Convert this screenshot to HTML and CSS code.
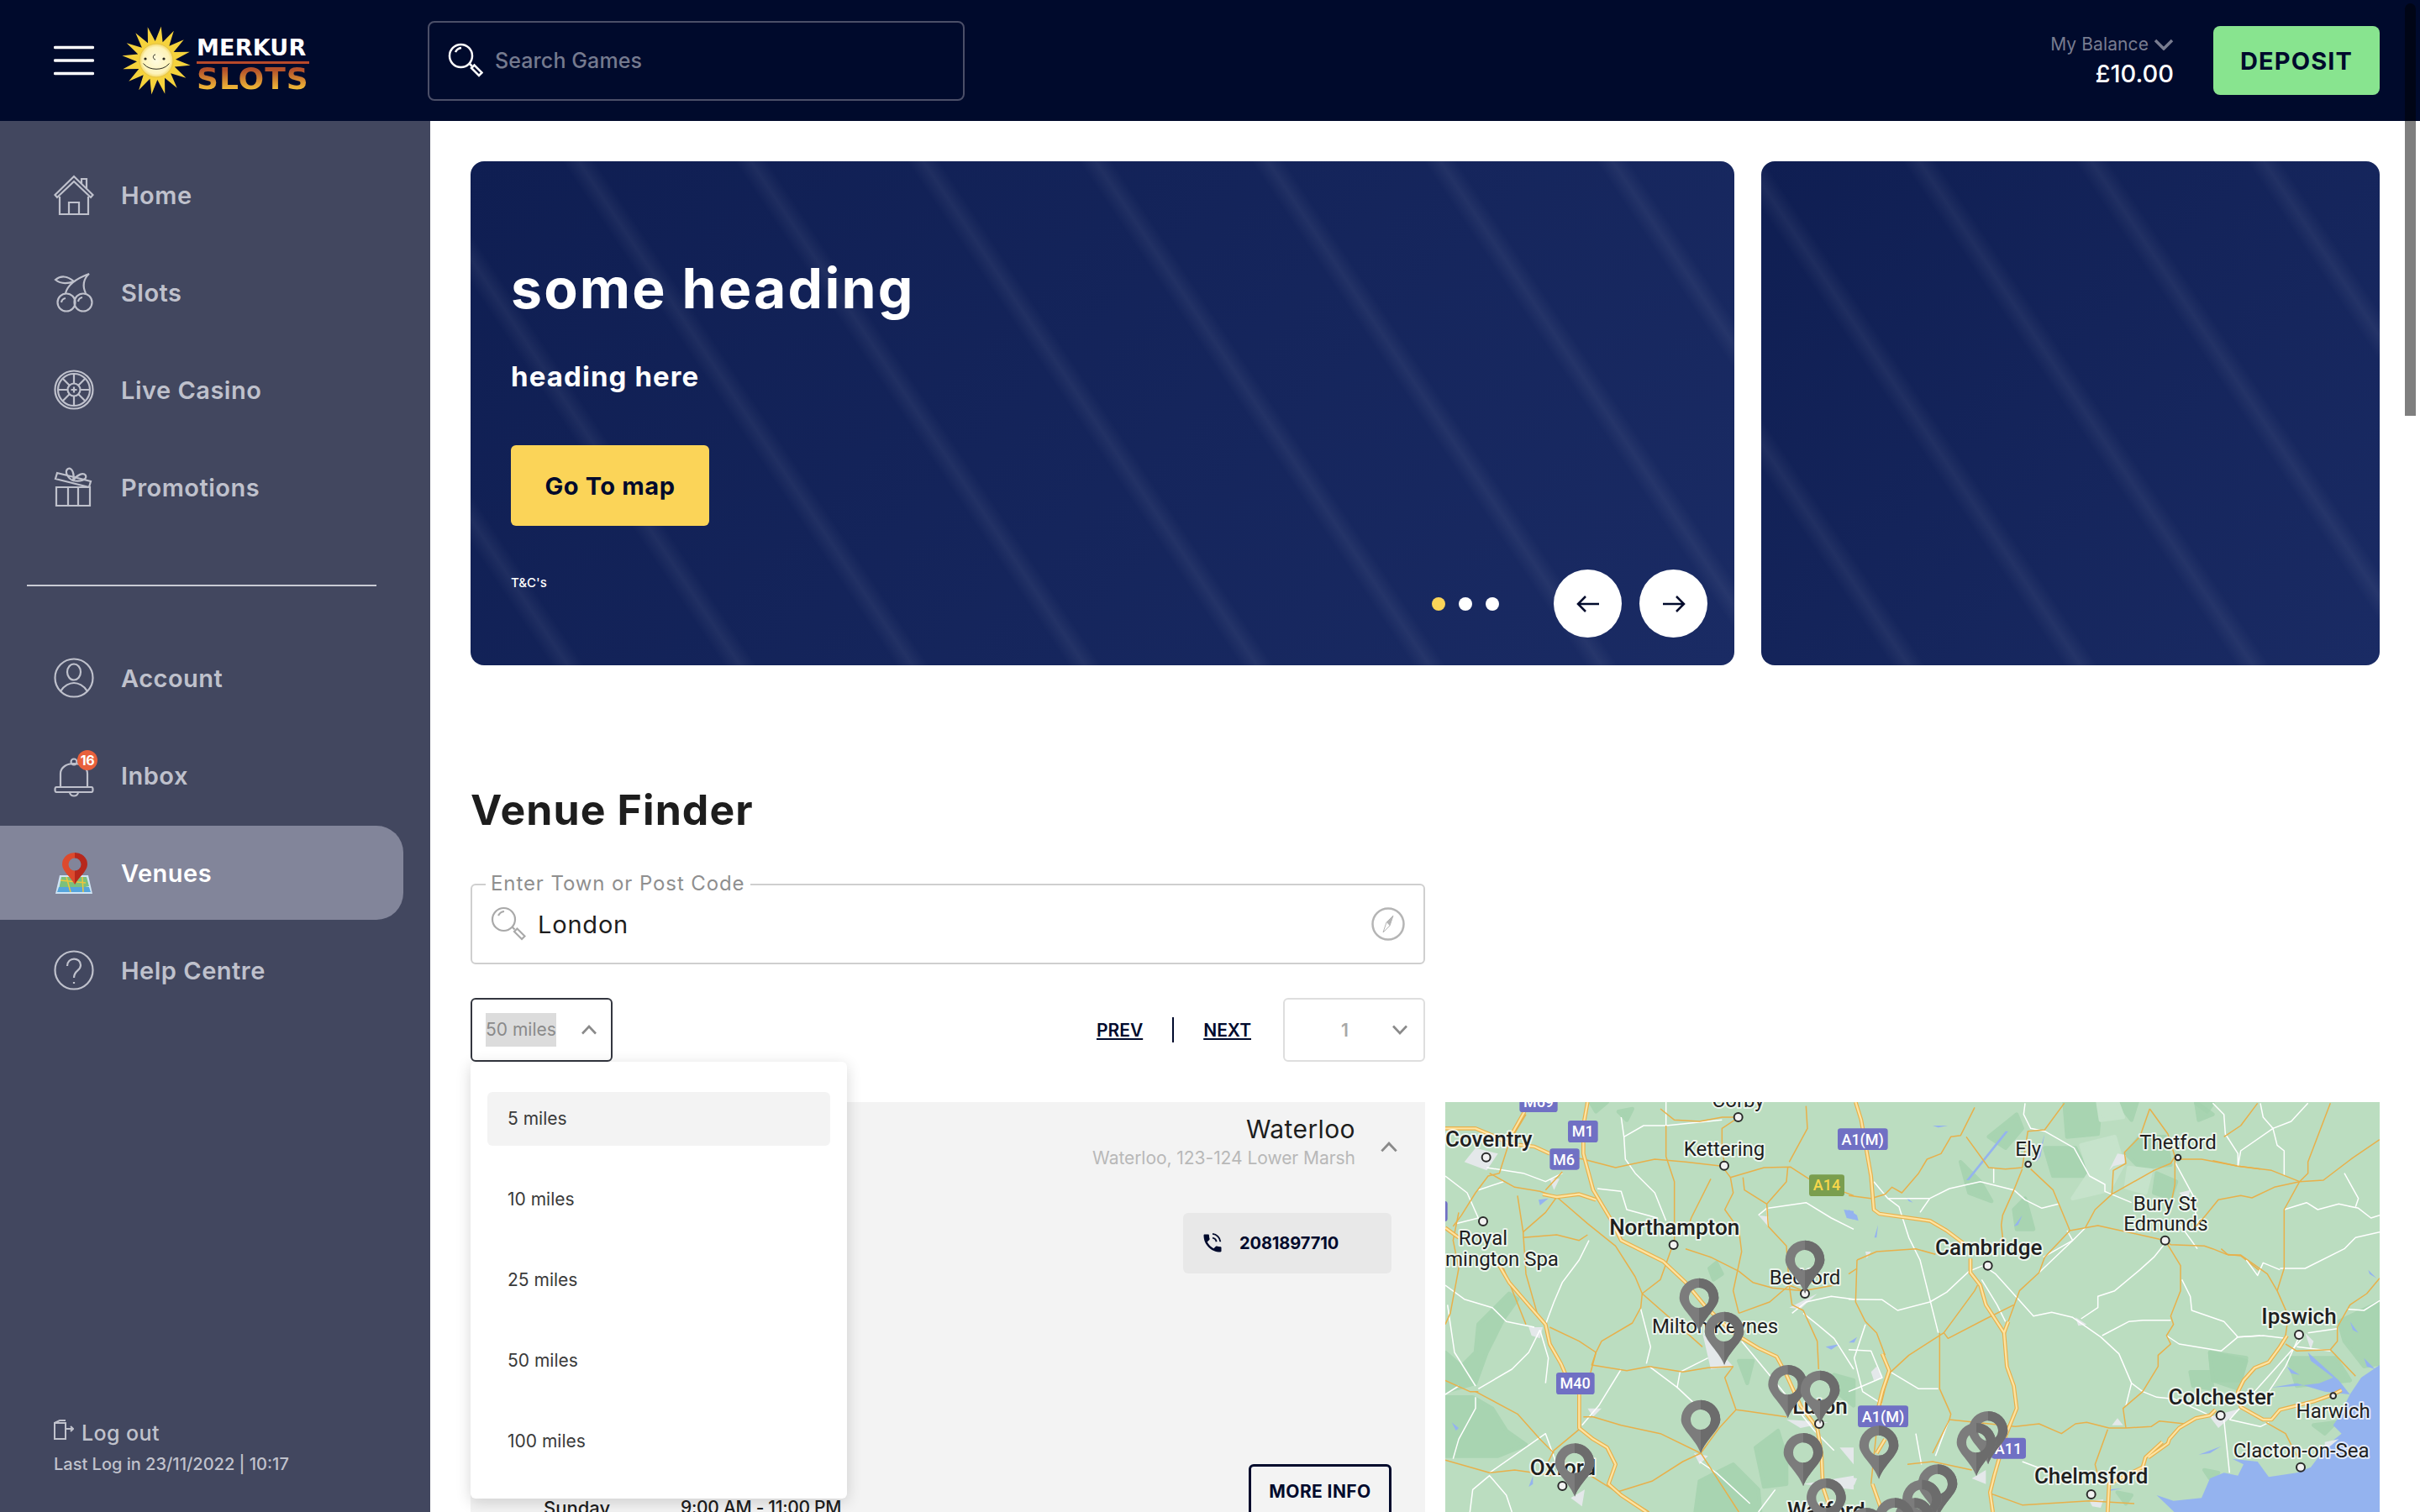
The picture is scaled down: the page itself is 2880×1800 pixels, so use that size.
FILE: index.html
```html
<!DOCTYPE html>
<html lang="en">
<head>
    <meta charset="UTF-8">
    <meta name="viewport" content="width=device-width, initial-scale=1.0">
    <title>Venue Finder</title>
    <link rel="stylesheet" href="styles.css">
</head>
<body>
    <header class="topbar">
        <div class="brand">
            <svg class="burger" viewBox="0 0 48 36"><path d="M1.5 2.5H46.5M1.5 18H46.5M1.5 33.5H46.5"/></svg>
            <svg class="sun" viewBox="-42 -42 84 84">
                <defs>
                    <radialGradient id="faceFill"><stop offset="0" stop-color="#fffbe0"/><stop offset=".8" stop-color="#fdf3b8"/><stop offset="1" stop-color="#f3d765"/></radialGradient>
                </defs>
                <polygon transform="rotate(8)" fill="#f5d23c" points="0,-41 4.5,-22.6 15.7,-37.9 12.8,-19.1 29,-29 19.1,-12.8 37.9,-15.7 22.6,-4.5 41,0 22.6,4.5 37.9,15.7 19.1,12.8 29,29 12.8,19.1 15.7,37.9 4.5,22.6 0,41 -4.5,22.6 -15.7,37.9 -12.8,19.1 -29,29 -19.1,12.8 -37.9,15.7 -22.6,4.5 -41,0 -22.6,-4.5 -37.9,-15.7 -19.1,-12.8 -29,-29 -12.8,-19.1 -15.7,-37.9 -4.5,-22.6"/>
                <circle r="20" fill="url(#faceFill)" stroke="#e6c544" stroke-width="1"/>
                <path d="M-14 5C-8 12 8 12 14 5M-14 5l-1.5-1.5M14 5l1.5-1.5M-1 -7C-4 -7 -5 -2 -1 -1" fill="none" stroke="#2b2a20" stroke-width="1"/>
                <circle cx="-13" cy="-2" r="1.6" fill="#2b2a20"/>
                <circle cx="9" cy="-2" r="1.6" fill="#2b2a20"/>
            </svg>
            <div class="wordmark">
                <span class="wordmark-top">MERKUR</span>
                <span class="wordmark-bottom">SLOTS</span>
            </div>
        </div>
        <div class="game-search">
            <svg class="game-search-icon" viewBox="0 0 42 42"><circle cx="15.5" cy="15.5" r="13.5"/><path d="M9 12a9 9 0 0 1 7-5M25.5 25.5l3 3M28 31l3.5-3.5 9 9-3.5 3.5z" transform="translate(0 -1)"/></svg>
            <span>Search Games</span>
        </div>
        <div class="balance">
            <div class="balance-label">My Balance <svg viewBox="0 0 24 14"><path d="M2 2L12 12 22 2"/></svg></div>
            <div class="balance-value">£10.00</div>
        </div>
        <a class="deposit" href="#">DEPOSIT</a>
    </header>

    <div class="layout">
        <aside class="sidebar">
            <nav class="nav-group">
                <a class="nav-item" href="#">
                    <svg class="nav-icon" viewBox="0 0 48 48"><path d="M1.5 24L24 2 46.5 24 44 27 24 8 4 27zM7 26V47H41V26M18 47V33H30V47M33 11V5H39V17"/></svg>
                    Home
                </a>
                <a class="nav-item" href="#">
                    <svg class="nav-icon" viewBox="0 0 48 48"><circle cx="15" cy="36" r="10.5"/><circle cx="35" cy="36" r="10.5"/><path d="M14 25C16 17 23 9 42 2 35 8 34 17 38 25M2 9C8 4 16 4 24 11 16 14 8 14 2 9zM9 36a6 6 0 0 1 5-5M29 35a6 6 0 0 1 5-5"/></svg>
                    Slots
                </a>
                <a class="nav-item" href="#">
                    <svg class="nav-icon" viewBox="0 0 48 48"><circle cx="24" cy="24" r="22.5"/><circle cx="24" cy="24" r="19"/><circle cx="24" cy="24" r="7.5"/><path d="M24 5V16.5M24 31.5V43M5 24H16.5M31.5 24H43M10.5 10.5L18.7 18.7M29.3 29.3L37.5 37.5M37.5 10.5L29.3 18.7M18.7 29.3L10.5 37.5M24 20.5V27.5M20.5 24H27.5"/></svg>
                    Live Casino
                </a>
                <a class="nav-item" href="#">
                    <svg class="nav-icon" viewBox="0 0 48 48"><path d="M3 24H43V46H3zM17 24V46M29 24V46M2 14L42 24 44 17 4 7zM23 16C17 14 12 5 17 2 22 0 25 9 23 16zM23 16C28 9 35 6 38 10 40 15 31 18 23 16z"/></svg>
                    Promotions
                </a>
            </nav>
            <hr class="nav-rule">
            <nav class="nav-group">
                <a class="nav-item" href="#">
                    <svg class="nav-icon" viewBox="0 0 48 48"><circle cx="24" cy="24" r="22.5"/><ellipse cx="24" cy="17" rx="8" ry="9.5"/><path d="M8 40C12 33 19 30 24 30S36 33 40 40"/></svg>
                    Account
                </a>
                <a class="nav-item" href="#">
                    <span class="nav-icon-wrap">
                        <svg class="nav-icon" viewBox="0 0 48 48"><path d="M8 38V22C8 6 40 6 40 22V38M3 38H45C47 38 47 44 45 44H3C1 44 1 38 3 38zM19 44C19 50 29 50 29 44"/><circle cx="24" cy="8" r="3.5"/></svg>
                        <span class="badge">16</span>
                    </span>
                    Inbox
                </a>
                <a class="nav-item nav-item-active" href="#">
                    <svg class="nav-icon nav-icon-color" viewBox="0 0 48 48">
                        <path d="M7 27H41L46 49H2z" fill="#cfe4f5"/>
                        <path d="M9 29H39L42 40 24 44H6z" fill="#7cc07c"/>
                        <path d="M6 41H42L44 47H4z" fill="#55a5dc"/>
                        <path d="M8 33L38 36M15 29L20 47M34 29L35 47" fill="none" stroke="#f0c63c" stroke-width="1.5"/>
                        <path d="M25 38C20 29 10 22 10 14A15 14 0 0 1 25 0z" fill="#dc4a2d"/>
                        <path d="M25 38C30 29 40 22 40 14A15 14 0 0 0 25 0z" fill="#b7281c"/>
                        <circle cx="25" cy="14" r="7.5" fill="#82859a"/>
                    </svg>
                    Venues
                </a>
                <a class="nav-item" href="#">
                    <svg class="nav-icon" viewBox="0 0 48 48"><circle cx="24" cy="24" r="22.5"/><path d="M16 19C16 8 32 8 32 18 32 25 24 24 24 33M24 38V40"/></svg>
                    Help Centre
                </a>
            </nav>
            <div class="sidebar-foot">
                <a class="logout" href="#">
                    <svg viewBox="0 0 24 24"><path d="M1 4H14V23H1zM1 4L7 1H14M14 11H23M20 8L23 11 20 14"/></svg>
                    Log out
                </a>
                <div class="last-login">Last Log in 23/11/2022 | 10:17</div>
            </div>
        </aside>

        <main class="content">
            <section class="hero-row">
                <div class="hero hero-main">
                    <h2 class="hero-title">some heading</h2>
                    <p class="hero-sub">heading here</p>
                    <a class="hero-btn" href="#">Go To map</a>
                    <div class="hero-foot">
                        <span class="hero-terms">T&amp;C's</span>
                        <div class="hero-controls">
                            <span class="dot dot-on"></span><span class="dot"></span><span class="dot"></span>
                            <a class="arrow arrow-first" href="#"><svg viewBox="0 0 28 24"><path d="M27 12H2M11 3L2 12 11 21"/></svg></a>
                            <a class="arrow" href="#"><svg viewBox="0 0 28 24"><path d="M1 12H26M17 3L26 12 17 21"/></svg></a>
                        </div>
                    </div>
                </div>
                <div class="hero hero-side"></div>
            </section>

            <section class="venues">
                <h1 class="venues-title">Venue Finder</h1>
                <div class="venue-search">
                    <span class="venue-search-label">Enter Town or Post Code</span>
                    <svg class="venue-search-icon" viewBox="0 0 42 42"><circle cx="15.5" cy="15.5" r="13.5"/><path d="M9 12a9 9 0 0 1 7-5M25.5 25.5l3 3M28 31l3.5-3.5 9 9-3.5 3.5z" transform="translate(0 -1)"/></svg>
                    <span class="venue-search-value">London</span>
                    <svg class="compass" viewBox="0 0 40 40"><circle cx="20" cy="20" r="18.5"/><path class="compass-needle" d="M26 10L22 22 14 30 18 18z"/><path class="compass-half" d="M26 10L22 22 18 18z"/></svg>
                </div>

                <div class="filter-row">
                    <div class="select-wrap">
                        <div class="select select-open">
                            <span class="select-picked">50 miles</span>
                            <svg class="chevron" viewBox="0 0 20 12"><path d="M2 10.5L10 2 18 10.5"/></svg>
                        </div>
                        <ul class="dropdown">
                            <li class="dropdown-on">5 miles</li>
                            <li>10 miles</li>
                            <li>25 miles</li>
                            <li>50 miles</li>
                            <li>100 miles</li>
                        </ul>
                    </div>
                    <div class="pager">
                        <a href="#">PREV</a>
                        <span class="pager-rule"></span>
                        <a href="#">NEXT</a>
                        <div class="select select-page">
                            <span>1</span>
                            <svg class="chevron" viewBox="0 0 20 12"><path d="M2 1.5L10 10 18 1.5"/></svg>
                        </div>
                    </div>
                </div>

                <div class="results">
                    <article class="venue-card">
                        <div class="venue-head">
                            <div>
                                <div class="venue-name">Waterloo</div>
                                <div class="venue-address">Waterloo, 123-124 Lower Marsh</div>
                            </div>
                            <svg class="chevron venue-chevron" viewBox="0 0 20 12"><path d="M2 10.5L10 2 18 10.5"/></svg>
                        </div>
                        <div class="venue-phone-row">
                            <a class="venue-phone" href="#">
                                <svg viewBox="0 0 24 24"><path d="M6.6 10.8c1.4 2.8 3.8 5.1 6.6 6.6l2.2-2.2c.3-.3.7-.4 1-.2 1.1.4 2.3.6 3.6.6.6 0 1 .4 1 1V20c0 .6-.4 1-1 1C10.6 21 3 13.4 3 4c0-.6.4-1 1-1h3.5c.6 0 1 .4 1 1 0 1.3.2 2.5.6 3.6.1.3 0 .7-.3 1z"/><path class="phone-arc" d="M12 2.5a9 9 0 0 1 8 8M12 6.5a5 5 0 0 1 4 4"/></svg>
                                2081897710
                            </a>
                        </div>
                        <div class="venue-foot">
                            <div class="venue-hours"><span>Sunday</span><span class="venue-time">9:00 AM - 11:00 PM</span></div>
                            <a class="more-info" href="#">MORE INFO</a>
                        </div>
                    </article>

                    <div class="map">
                        <svg class="map-svg" viewBox="12 6 3336 1500">
                            <defs>
                                <g id="pin">
                                    <path fill="#7c7c7c" fill-rule="evenodd" d="M0 0C-18-50-70-85-70-120A70 70 0 0 1 70-120C70-85 18-50 0 0ZM36-120A36 36 0 1 0-36-120 36 36 0 1 0 36-120Z"/>
                                    <path fill="#6c6c6c" d="M0 0C18-50 70-85 70-120A70 70 0 0 0 0-190V-156A36 36 0 0 1 0-84Z"/>
                                </g>
                            </defs>

                            <!-- left part -->
                            <g>
                                <g class="map-wood">
                                    <path d="M12 900L70 950 120 900 130 800 190 740 240 690 270 710 220 780 160 900 120 1010 12 1040Z"/>
                                    <path d="M12 1060L110 1060 180 1100 230 1180 300 1230 200 1270 90 1270 12 1270Z"/>
                                    <path d="M900 1506L920 1360 1040 1300 1130 1390 1140 1506Z"/>
                                    <path d="M1120 1240L1200 1180 1230 1280 1230 1370 1150 1380Z"/>
                                    <path d="M1060 930L1110 930 1090 1010Z"/>
                                    <path d="M955 600L980 580 1000 620 970 640Z"/>
                                    <path d="M1400 980L1470 1000 1470 1090 1420 1050Z"/>
                                    <path d="M530 6L590 6 550 40Z"/>
                                    <path d="M630 40L680 30 660 70Z"/>
                                </g>
                                <g class="map-water">
                                    <path d="M345 355L380 350 350 375Z"/>
                                    <path d="M1435 390L1470 395 1470 425 1445 420Z"/>
                                    <path d="M35 1150L60 1170 50 1180Z"/>
                                    <path d="M1370 880L1420 870 1390 890Z"/>
                                    <path d="M310 1380L325 1340 325 1370Z"/>
                                </g>
                                <g class="map-town">
                                    <path d="M120 170L200 190 160 250 80 220Z"/>
                                    <path d="M385 280L420 280 400 320Z"/>
                                    <path d="M1130 410L1165 415 1165 450Z"/>
                                    <path d="M310 810L360 810 350 850 320 840Z"/>
                                    <path d="M930 830L1040 950 960 960Z"/>
                                    <path d="M1240 740L1340 690 1280 745Z"/>
                                    <path d="M520 1100L570 1100 540 1130Z"/>
                                    <path d="M460 1420L510 1390 500 1450Z"/>
                                    <path d="M1230 1140L1380 1150 1280 1170Z"/>
                                    <path d="M1420 1240L1470 1240 1470 1300Z"/>
                                    <path d="M1290 1370L1470 1340 1470 1390Z"/>
                                    <path d="M900 1260L950 1270 920 1300Z"/>
                                </g>
                                <g class="map-white">
                                    <path d="M650 130L720 90 800 90 1000 70"/>
                                    <path d="M640 60L650 130 655 210 690 260 760 330 800 430"/>
                                    <path d="M555 315L640 325 660 390 770 420"/>
                                    <path d="M1165 385L1300 365 1390 420 1470 460"/>
                                    <path d="M1165 450L1160 385 1130 410"/>
                                    <path d="M525 500L490 570 430 650 400 720 370 800"/>
                                    <path d="M12 660L80 710 180 740 230 790 330 810"/>
                                    <path d="M20 730L45 900 120 1020"/>
                                    <path d="M12 1050L60 1020M130 1030L250 960 310 900 350 820"/>
                                    <path d="M350 820L380 920 370 1010"/>
                                    <path d="M710 745L745 880 730 940"/>
                                    <path d="M740 950L840 1025 850 970 950 920"/>
                                    <path d="M840 1025L920 1100"/>
                                    <path d="M640 960L560 1090 500 1160"/>
                                    <path d="M120 1060L120 1100 60 1210 40 1280"/>
                                    <path d="M170 1330L370 1190 410 1300"/>
                                    <path d="M1070 860L1210 1030 1330 1180 1400 1250"/>
                                    <path d="M1250 760L1300 720 1390 700 1470 710"/>
                                    <path d="M1290 760L1340 800 1400 850 1470 960"/>
                                    <path d="M12 270L90 330 130 420 50 440"/>
                                    <path d="M160 240L290 260 370 290 430 260"/>
                                    <path d="M130 320L220 290"/>
                                    <path d="M100 1470L110 1390 170 1340 230 1410 250 1470"/>
                                    <path d="M920 1290L980 1330 1100 1440"/>
                                    <path d="M1190 1390L1130 1470"/>
                                    <path d="M800 0L800 90"/>
                                </g>
                                <g class="map-road">
                                    <path d="M300 50L240 150 205 260 165 270 120 330 70 410 40 450"/>
                                    <path d="M170 260L260 310 350 325 410 345 520 440 620 520 690 630 715 690 840 800 930 880"/>
                                    <path d="M370 320L430 255"/>
                                    <path d="M270 340L290 470 300 620 340 760"/>
                                    <path d="M290 490L410 480 490 500 520 480"/>
                                    <path d="M290 470L370 400 410 345"/>
                                    <path d="M715 690L710 740 680 795 570 860 550 900 535 945 660 965 740 950 860 970 950 955 1040 950"/>
                                    <path d="M385 810L490 860 550 900"/>
                                    <path d="M715 690L780 640 830 500"/>
                                    <path d="M830 500L830 290 800 200 800 90"/>
                                    <path d="M780 30L830 70 920 75 1000 60 1060 60"/>
                                    <path d="M1060 60L1000 100 1000 170 1010 235"/>
                                    <path d="M960 280L890 420 870 480"/>
                                    <path d="M1030 275L1040 330 1010 390 1060 460 1070 540 1040 680 1060 760"/>
                                    <path d="M1075 275L1080 320 1160 370 1230 290 1235 238"/>
                                    <path d="M1160 370L1165 450 1230 520 1240 660 1290 680"/>
                                    <path d="M870 530L960 560 1060 610 1110 650 1180 670 1290 680 1400 660"/>
                                    <path d="M1060 760L1170 720 1240 660 1250 730 1290 750 1340 860 1345 960"/>
                                    <path d="M1300 20L1305 100 1240 220"/>
                                    <path d="M1040 950L1010 990 1050 1105 1090 1110 1230 1130"/>
                                    <path d="M1050 1105L990 1170 924 1260 860 1290 750 1360 620 1400"/>
                                    <path d="M12 1285L170 1330 260 1320 400 1340"/>
                                    <path d="M505 1130L540 1130 640 1160 780 1190 924 1260"/>
                                    <path d="M490 1175L400 1250 380 1290"/>
                                    <path d="M130 1040L100 1040 12 1000"/>
                                    <path d="M120 1040L270 1120 350 1210 400 1260"/>
                                    <path d="M925 1260L970 1330 1060 1470"/>
                                    <path d="M530 1340L740 1470"/>
                                    <path d="M550 900L530 975"/>
                                    <path d="M60 400L40 500 60 600 30 760 12 800"/>
                                    <path d="M220 600L300 800"/>
                                    <path d="M385 190L505 210 620 240 760 210 870 220 1000 235 1030 275 1150 240 1245 238 1310 280 1470 340"/>
                                </g>
                                <g class="map-motorway">
                                    <g id="motorwaysLeft">
                                        <path d="M520 6L505 90 505 190 540 320 600 420 640 500 700 530 790 575 870 650 940 735 1040 830 1130 885 1195 915 1230 980 1280 1090 1340 1170 1355 1260 1360 1380 1390 1470"/>
                                        <path d="M12 100L120 100 180 125 240 155 330 165 385 190"/>
                                        <path d="M360 335L410 345 490 335 550 355"/>
                                        <path d="M205 590L240 650 300 720 370 800 385 870 425 940 440 975"/>
                                        <path d="M12 455L60 490"/>
                                        <path d="M490 1040L490 1170 540 1210 590 1240 620 1300 595 1370 640 1410 730 1470"/>
                                        <path d="M295 40L250 120"/>
                                    </g>
                                </g>
                                <use class="map-motorway-inner" href="#motorwaysLeft"/>
                                <rect class="shield" x="277" y="-40" width="136" height="82" rx="10"/>
                                <text class="shield-text" x="345" y="24">M69</text>
                                <rect class="shield" x="450" y="72" width="107" height="78" rx="10"/>
                                <text class="shield-text" x="503" y="130">M1</text>
                                <rect class="shield" x="385" y="172" width="106" height="76" rx="10"/>
                                <text class="shield-text" x="435" y="230">M6</text>
                                <rect class="shield" x="408" y="972" width="137" height="78" rx="10"/>
                                <text class="shield-text" x="476" y="1030">M40</text>
                                <rect class="shield" x="-40" y="360" width="60" height="72" rx="10"/>
                                <rect class="shield shield-green" x="1311" y="265" width="126" height="77" rx="10"/>
                                <text class="shield-text shield-text-green" x="1374" y="322">A14</text>
                                <g class="map-dots">
                                    <circle cx="1058" cy="60" r="15"/><circle cx="158" cy="203" r="15"/><circle cx="1008" cy="233" r="15"/><circle cx="147" cy="432" r="15"/><circle cx="827" cy="516" r="15"/><circle cx="1296" cy="690" r="15"/><circle cx="1347" cy="1155" r="15"/><circle cx="430" cy="1377" r="15"/>
                                </g>
                                <text class="map-label" x="1058" y="25">Corby</text>
                                <text class="map-label map-label-big map-label-start" x="12" y="165">Coventry</text>
                                <text class="map-label" x="1008" y="198">Kettering</text>
                                <text class="map-label" x="147" y="517">Royal</text>
                                <text class="map-label map-label-start" x="12" y="590">mington Spa</text>
                                <text class="map-label map-label-big" x="830" y="480">Northampton</text>
                                <text class="map-label" x="1296" y="657">Bedford</text>
                                <text class="map-label" x="975" y="832">Milton Keynes</text>
                                <text class="map-label map-label-big" x="1350" y="1118">Luton</text>
                                <text class="map-label map-label-big" x="432" y="1338">Oxford</text>
                                <text class="map-label map-label-big" x="1372" y="1490">Watford</text>
                            </g>

                            <!-- middle part -->
                            <g transform="translate(1452 0)">
                                <g class="map-wood">
                                    <path d="M500 130L600 50 620 100 560 170Z"/>
                                    <path d="M400 220L470 290 510 360 430 330Z"/>
                                    <path d="M590 390L630 350 660 460 600 460Z"/>
                                    <path d="M700 170L810 170 860 270 730 270Z"/>
                                    <path d="M770 6L900 6 890 120 780 130Z"/>
                                    <path d="M990 190L1040 130 1130 130 1150 230 1040 240Z"/>
                                    <path d="M960 6L1030 6 1010 70Z"/>
                                    <path d="M1290 900L1420 920 1400 1000 1300 1000Z"/>
                                    <path d="M1220 970L1290 970 1300 1030 1230 1020Z"/>
                                    <path d="M1240 6L1300 50 1250 70Z"/>
                                    <path d="M1100 260L1170 290 1150 350 1090 330Z"/>
                                    <path d="M960 1400L1010 1410 990 1440Z"/>
                                </g>
                                <g class="map-light">
                                    <path d="M830 160L950 130 980 230 930 320 800 350 860 260Z"/>
                                    <path d="M1000 240L1080 250 1060 330 990 310Z"/>
                                    <path d="M890 6L960 6 980 60 900 70Z"/>
                                </g>
                                <g class="map-water">
                                    <path d="M0 390L30 410 35 430 0 420Z"/>
                                    <path d="M205 345L230 365 215 360Z"/>
                                    <path d="M590 450L620 410 605 445Z"/>
                                    <path d="M300 90L355 90 320 97Z"/>
                                    <path d="M92 490L105 445 100 490Z"/>
                                    <path d="M0 865L30 845 20 865Z"/>
                                    <path d="M420 285L430 285 570 110 560 110Z"/>
                                    <path d="M670 220L700 120 685 200Z"/>
                                    <path d="M930 1390L980 1385 930 1395Z"/>
                                </g>
                                <g class="map-town">
                                    <path d="M930 250L960 190 990 195 985 225 945 235Z"/>
                                    <path d="M80 970L100 950 120 990 90 1000Z"/>
                                    <path d="M1180 330L1220 320 1210 360Z"/>
                                    <path d="M940 1160L980 1160 960 1135Z"/>
                                    <path d="M1290 1130L1400 1100 1320 1170Z"/>
                                    <path d="M860 1430L910 1425 900 1455 870 1450Z"/>
                                    <path d="M440 1350L490 1320 490 1370Z"/>
                                    <path d="M60 540L80 540 65 565Z"/>
                                    <path d="M0 1345L30 1350 20 1375Z"/>
                                    <path d="M810 775L850 800 820 805Z"/>
                                </g>
                                <g class="map-white">
                                    <path d="M630 10L625 50 650 100 700 110 805 170 860 270 915 300 915 325 1010 365"/>
                                    <path d="M90 290L140 350 180 380 215 490 255 570 320 830"/>
                                    <path d="M140 350L290 350 360 315 470 290 590 320 630 355 690 385 750 370"/>
                                    <path d="M255 400L290 350"/>
                                    <path d="M518 240V295"/>
                                    <path d="M0 710L120 712 175 750 290 720 350 685 430 610 480 590 525 620 660 770 725 757 800 775 900 845 965 905 1010 1010 1050 1040 1100 1060 1150 1065"/>
                                    <path d="M475 640L530 730 560 790"/>
                                    <path d="M680 615L800 500 845 455"/>
                                    <path d="M695 560L800 500 780 465"/>
                                    <path d="M830 780L890 740 890 700 950 680 1040 605 1090 560 1130 510"/>
                                    <path d="M905 840L1000 790 1050 785 1150 785"/>
                                    <path d="M1135 840L1180 870 1330 895 1390 845 1470 840"/>
                                    <path d="M1190 640L1220 700 1225 750 1340 790 1390 845"/>
                                    <path d="M1010 1010L990 1090"/>
                                    <path d="M150 970L250 1030 320 1030"/>
                                    <path d="M60 800L20 920 50 1040 120 1085"/>
                                    <path d="M0 890L80 895 120 990 50 1020 0 1040"/>
                                    <path d="M1180 440L1245 530"/>
                                    <path d="M620 1290L700 1320"/>
                                    <path d="M240 1190L260 1300M355 1150L310 1270"/>
                                    <path d="M1150 1060L1300 1130"/>
                                    <path d="M1165 220L1230 340 1240 410"/>
                                </g>
                                <g class="map-road">
                                    <path d="M0 340L80 350 130 335 155 310 190 330 250 260 280 210 330 190 365 130 400 125 450 25"/>
                                    <path d="M420 130L500 240 560 245 620 240 640 110 700 105 770 10"/>
                                    <path d="M620 245L590 320 550 410 545 445 550 490 530 520"/>
                                    <path d="M650 245L730 320 780 440 790 465 890 447 1130 500 1150 515 1270 520 1300 530 1350 550 1400 555 1470 610"/>
                                    <path d="M1130 500L1185 590 1185 680 1150 770 1160 800 1135 840 1150 870 1105 910 1105 950 1050 1040 980 1100 990 1170"/>
                                    <path d="M790 465L700 560 680 615 610 680 570 790"/>
                                    <path d="M845 455L880 390 940 335 1090 250 1150 225 1165 200 1165 300 1155 350"/>
                                    <path d="M940 335L945 250 990 225 985 185 1040 130 1075 30"/>
                                    <path d="M1075 30L1140 120 1165 200"/>
                                    <path d="M1175 210L1260 210 1390 235 1470 245"/>
                                    <path d="M30 570L100 540 240 530 310 550"/>
                                    <path d="M0 620L30 600"/>
                                    <path d="M325 830L325 1030 365 1120 360 1140 595 1165 680 1155 760 1190 810 1155 850 1150 930 1170 990 1170 1080 1165 1110 1145 1200 1155"/>
                                    <path d="M590 730L490 780 355 850 340 830 450 680 460 660"/>
                                    <path d="M340 830L215 910 150 970 130 1030 105 1130"/>
                                    <path d="M925 1175L880 1300 890 1340"/>
                                    <path d="M510 1405L620 1445 860 1430 1020 1440"/>
                                    <path d="M360 1140L300 1260"/>
                                    <path d="M210 1300L300 1290 440 1320"/>
                                    <path d="M30 570L25 720 60 790 100 830 130 910"/>
                                    <path d="M105 1130L80 1370"/>
                                </g>
                                <g class="map-motorway">
                                    <g id="motorwaysMiddle">
                                        <path d="M25 6L45 70 80 270 90 390 110 405 290 430 350 465 410 510"/>
                                        <path d="M435 565L435 615 470 660 490 730 555 830 565 950 590 1020 600 1100 560 1200 520 1340 505 1400 515 1470"/>
                                        <path d="M555 830L570 790"/>
                                        <path d="M120 905L145 965 120 1040 100 1120"/>
                                        <path d="M100 1260L130 1210"/>
                                        <path d="M85 1370L120 1470"/>
                                        <path d="M1120 1220L1060 1275 1050 1310 930 1370 925 1470"/>
                                        <path d="M1310 1105L1290 1125 1240 1135 1180 1170 1145 1210 1140 1225 1070 1275"/>
                                    </g>
                                </g>
                                <use class="map-motorway-inner" href="#motorwaysMiddle"/>
                                <rect class="shield" x="-39" y="100" width="179" height="77" rx="10"/>
                                <text class="shield-text" x="50" y="158">A1(M)</text>
                                <rect class="shield" x="33" y="1090" width="180" height="77" rx="10"/>
                                <text class="shield-text" x="123" y="1148">A1(M)</text>
                                <rect class="shield" x="510" y="1205" width="123" height="75" rx="10"/>
                                <text class="shield-text" x="570" y="1263">A11</text>
                                <g class="map-dots">
                                    <circle cx="641" cy="228" r="10"/><circle cx="1176" cy="204" r="10"/><circle cx="1130" cy="500" r="15"/><circle cx="497" cy="590" r="15"/><circle cx="1328" cy="1125" r="15"/><circle cx="866" cy="1407" r="15"/>
                                </g>
                                <text class="map-label" x="641" y="198">Ely</text>
                                <text class="map-label" x="1176" y="175">Thetford</text>
                                <text class="map-label" x="1130" y="393">Bury St</text>
                                <text class="map-label" x="1132" y="465">Edmunds</text>
                                <text class="map-label map-label-big" x="500" y="553">Cambridge</text>
                                <text class="map-label map-label-big" x="866" y="1368">Chelmsford</text>
                            </g>

                            <!-- right part -->
                            <g transform="translate(2052 0)">
                                <g class="map-wood">
                                    <path d="M1150 790L1296 720 1296 940 1240 950 1170 860Z"/>
                                    <path d="M970 920L1140 920 1190 1000 1000 1020Z"/>
                                    <path d="M690 900L820 930 790 1030 700 1000Z"/>
                                    <path d="M640 10L700 10 680 40Z"/>
                                    <path d="M1060 1160L1140 1150 1100 1190Z"/>
                                    <path d="M670 1320L720 1330 690 1350Z"/>
                                </g>
                                <path class="map-sea" d="M1296 945L1230 990 1190 1050 1150 1130 1130 1160 1160 1190 1110 1230 1050 1310 1000 1330 900 1345 860 1290 770 1280 810 1300 790 1340 740 1330 690 1350 660 1420 560 1430 500 1410 600 1506 1296 1506Z"/>
                                <path class="map-sea" d="M910 1025L1000 1010 1100 1040 1190 1050 1150 1000 1040 900 1050 930 1130 990 1080 1010 1000 1020Z"/>
                                <g class="map-water">
                                    <path d="M650 1265L730 1235 690 1260Z"/>
                                    <path d="M965 950L1010 980 980 975Z"/>
                                    <path d="M1255 605L1285 635 1260 620Z"/>
                                    <path d="M1240 920L1280 960 1250 950Z"/>
                                    <path d="M1190 790L1220 830 1200 820Z"/>
                                </g>
                                <g class="map-town">
                                    <path d="M1030 830L1060 860 1050 890Z"/>
                                    <path d="M1100 1220L1150 1210 1100 1250Z"/>
                                </g>
                                <g class="map-white">
                                    <path d="M700 10L740 50 745 120 790 190 790 235"/>
                                    <path d="M790 235L800 180 915 100 930 160 955 180 955 270"/>
                                    <path d="M870 10L880 60 915 100 980 75 1040 10"/>
                                    <path d="M955 390L1035 365 1075 390 1150 370 1220 385 1265 420 1296 410"/>
                                    <path d="M1210 380L1220 350 1170 260"/>
                                    <path d="M940 600L1030 600 1170 530 1210 490 1296 470"/>
                                    <path d="M820 570L860 625 880 580 940 605"/>
                                    <path d="M785 845L880 840 960 850"/>
                                    <path d="M1010 840L960 950 900 1040"/>
                                    <path d="M1040 830L1145 815"/>
                                    <path d="M760 1140L1020 850"/>
                                    <path d="M740 1140L760 1330"/>
                                    <path d="M760 1140L870 1165 900 1150"/>
                                    <path d="M1296 715L1240 750 1180 745"/>
                                    <path d="M1000 880L1120 895"/>
                                </g>
                                <g class="map-road">
                                    <path d="M740 130L800 90 860 10"/>
                                    <path d="M700 215L790 235 910 250 1010 290 1095 285 1200 205 1296 140"/>
                                    <path d="M1120 10L1040 220 1040 260 1010 290 955 390 955 600 930 680 970 770 960 840"/>
                                    <path d="M1010 290L920 310 840 348 800 340 720 355 675 410 640 450"/>
                                    <path d="M730 530L755 552 800 552 895 620 930 680"/>
                                    <path d="M1296 635L1250 690 1190 730 1145 810 1145 860 1120 890 1000 895 960 870"/>
                                    <path d="M1120 890L1210 985"/>
                                    <path d="M890 1150L960 1190 1000 1270"/>
                                </g>
                                <g class="map-motorway">
                                    <g id="motorwaysRight">
                                        <path d="M965 840L940 880 900 935 850 955 810 1000 790 1040 800 1095 880 1140 910 1140 940 1105 1060 1075 1130 1050 1160 1035"/>
                                    </g>
                                </g>
                                <use class="map-motorway-inner" href="#motorwaysRight"/>
                                <g class="map-dots">
                                    <circle cx="1008" cy="837" r="15"/><circle cx="1130" cy="1055" r="10"/><circle cx="1014" cy="1310" r="15"/>
                                </g>
                                <text class="map-label map-label-big" x="1008" y="798">Ipswich</text>
                                <text class="map-label map-label-big" x="730" y="1087">Colchester</text>
                                <text class="map-label" x="1130" y="1135">Harwich</text>
                                <text class="map-label" x="1016" y="1276">Clacton-on-Sea</text>
                            </g>

                            <!-- venue pins -->
                            <use href="#pin" transform="translate(1296 690)"/>
                            <use href="#pin" transform="translate(918 825)"/>
                            <use href="#pin" transform="translate(1008 945)"/>
                            <use href="#pin" transform="translate(1235 1135)"/>
                            <use href="#pin" transform="translate(1350 1155)"/>
                            <use href="#pin" transform="translate(924 1260)"/>
                            <use href="#pin" transform="translate(474 1415)"/>
                            <use href="#pin" transform="translate(1290 1378)"/>
                            <use href="#pin" transform="translate(1372 1540)"/>
                            <use href="#pin" transform="translate(1560 1352)"/>
                            <use href="#pin" transform="translate(1950 1300)"/>
                            <use href="#pin" transform="translate(1908 1342)"/>
                            <use href="#pin" transform="translate(1770 1490)"/>
                            <use href="#pin" transform="translate(1714 1545)"/>
                            <use href="#pin" transform="translate(1687 1610)"/>
                            <use href="#pin" transform="translate(1617 1610)"/>
                            <use href="#pin" transform="translate(1514 1645)"/>
                        </svg>
                    </div>
                </div>
            </section>
        </main>
    </div>

    <div class="scroll-thumb"></div>
</body>
</html>
```

FILE: styles.css
```css
* {
    box-sizing: border-box;
}

html, body {
    margin: 0;
    height: 100%;
    overflow: hidden;
}

body {
    font-family: Inter, "Open Sans", sans-serif;
    color: #1d1d1d;
    background: #fff;
    display: flex;
    flex-direction: column;
}

a {
    color: inherit;
    text-decoration: none;
}

/* top bar */
.topbar {
    height: 144px;
    flex: none;
    background: #000a2c;
    display: flex;
    align-items: center;
    padding: 0 48px 0 64px;
}

.brand {
    width: 445px;
    display: flex;
    align-items: center;
}

.burger {
    width: 48px;
    height: 36px;
    margin-right: 32px;
    fill: none;
    stroke: #fff;
    stroke-width: 3.5;
    stroke-linecap: round;
}

.sun {
    width: 84px;
    height: 84px;
    margin-right: 6px;
}

.wordmark {
    display: flex;
    flex-direction: column;
    margin-top: 11px;
    font-family: "DejaVu Sans", sans-serif;
    font-weight: 700;
}

.wordmark-top {
    color: #fff;
    font-size: 27px;
    line-height: 28px;
    padding-bottom: 2px;
    border-bottom: 3px solid #b8492a;
    letter-spacing: .2px;
}

.wordmark-bottom {
    font-size: 36px;
    letter-spacing: 1px;
    line-height: 36px;
    background: linear-gradient(#b4502a 20%, #f3bd38 85%);
    -webkit-background-clip: text;
    background-clip: text;
    color: transparent;
}

.game-search {
    width: 639px;
    height: 95px;
    border: 2px solid #4b4f68;
    border-radius: 8px;
    display: flex;
    align-items: center;
    padding-left: 22px;
    color: #757a8f;
    font-size: 25px;
    font-weight: 500;
    letter-spacing: .1px;
}

.game-search-icon {
    width: 42px;
    height: 42px;
    margin-right: 14px;
    fill: none;
    stroke: #fff;
    stroke-width: 2.5;
}

.balance {
    margin-left: auto;
    display: flex;
    flex-direction: column;
    align-items: flex-end;
    margin-right: 47px;
}

.balance-label {
    color: #787c90;
    font-size: 21px;
    letter-spacing: .1px;
    display: flex;
    align-items: center;
    gap: 6px;
    height: 30px;
}

.balance-label svg {
    width: 24px;
    height: 14px;
    fill: none;
    stroke: #787c90;
    stroke-width: 3.5;
}

.balance-value {
    color: #fff;
    font-size: 29px;
    font-weight: 500;
    line-height: 38px;
    margin-top: 1px;
}

.deposit {
    width: 198px;
    height: 82px;
    background: #88e48f;
    border-radius: 8px;
    color: #000a2c;
    display: flex;
    align-items: center;
    justify-content: center;
    font-size: 29px;
    font-weight: 700;
    letter-spacing: 1.1px;
}

.layout {
    flex: 1;
    display: flex;
    min-height: 0;
}

/* side menu */
.sidebar {
    width: 512px;
    flex: none;
    background: #42475f;
    display: flex;
    flex-direction: column;
    padding: 32px 0 42px;
}

.nav-group {
    display: flex;
    flex-direction: column;
    gap: 4px;
}

.nav-item {
    height: 112px;
    width: 480px;
    padding-left: 64px;
    display: flex;
    align-items: center;
    gap: 32px;
    color: #bfc1cc;
    font-size: 29px;
    font-weight: 600;
    letter-spacing: .5px;
    border-radius: 0 32px 32px 0;
}

.nav-item-active {
    background: #82859a;
    color: #fff;
}

.nav-icon {
    width: 48px;
    height: 48px;
    flex: none;
    fill: none;
    stroke: #bfc1cc;
    stroke-width: 2.2;
    overflow: visible;
    display: block;
}

.nav-icon-color {
    stroke: none;
}

.nav-icon-wrap {
    position: relative;
    display: block;
}

.badge {
    position: absolute;
    top: -6px;
    right: -4px;
    width: 24px;
    height: 24px;
    border-radius: 50%;
    background: #e8603c;
    color: #fff;
    font-size: 16px;
    font-weight: 700;
    line-height: 24px;
    text-align: center;
    letter-spacing: -.5px;
}

.nav-rule {
    width: 416px;
    margin: 60px 0 53px 32px;
    border: 0;
    border-top: 2px solid #c9cbd4;
}

.sidebar-foot {
    margin-top: auto;
    padding-left: 64px;
    color: #c0c2cc;
}

.logout {
    display: flex;
    align-items: center;
    gap: 9px;
    font-size: 25px;
    font-weight: 500;
    letter-spacing: .4px;
    height: 32px;
}

.logout svg {
    width: 24px;
    height: 24px;
    margin-top: -8px;
    fill: none;
    stroke: #c0c2cc;
    stroke-width: 2;
}

.last-login {
    font-size: 20px;
    font-weight: 500;
    margin-top: 6px;
    line-height: 30px;
}

/* main column */
.content {
    flex: 1;
    min-width: 0;
    padding: 48px 48px 0;
}

.hero-row {
    display: flex;
    gap: 32px;
}

.hero {
    height: 600px;
    border-radius: 16px;
    overflow: hidden;
    color: #fff;
}

.hero-main {
    width: 1504px;
    padding: 0 32px 0 48px;
    background:
        repeating-linear-gradient(56.5deg, transparent 0, transparent 80px, rgba(255, 255, 255, .06) 96.5px, transparent 113px, transparent 171px),
        linear-gradient(135deg, #0f1e52, #1a2b64);
}

.hero-side {
    flex: 1;
    background:
        repeating-linear-gradient(56.5deg, transparent 0, transparent 129px, rgba(255, 255, 255, .06) 146px, transparent 163px, transparent 171px),
        linear-gradient(135deg, #0f1e52, #1a2b64);
}

.hero-title {
    margin: 112px 0 0;
    font-size: 66px;
    font-weight: 700;
    line-height: 78px;
    letter-spacing: 2.2px;
}

.hero-sub {
    margin: 46px 0 0;
    font-size: 33px;
    font-weight: 700;
    line-height: 40px;
    letter-spacing: 1.1px;
}

.hero-btn {
    margin-top: 62px;
    width: 236px;
    height: 96px;
    background: #fbd458;
    border-radius: 6px;
    color: #000a2c;
    font-size: 29px;
    font-weight: 700;
    letter-spacing: .6px;
    display: flex;
    align-items: center;
    justify-content: center;
}

.hero-foot {
    display: flex;
    justify-content: space-between;
    margin-top: 38px;
}

.hero-terms {
    font-size: 15px;
    font-weight: 500;
    line-height: 60px;
}

.hero-controls {
    display: flex;
    align-items: center;
    margin-top: 14px;
}

.dot {
    width: 16px;
    height: 16px;
    border-radius: 50%;
    background: #fff;
    margin-left: 16px;
}

.dot-on {
    background: #fbd458;
}

.arrow {
    width: 81px;
    height: 81px;
    border-radius: 50%;
    background: #fff;
    margin-left: 21px;
    display: flex;
    align-items: center;
    justify-content: center;
}

.arrow-first {
    margin-left: 65px;
}

.arrow svg {
    width: 28px;
    height: 24px;
    fill: none;
    stroke: #000a2c;
    stroke-width: 2.5;
}

/* venue finder */
.venues-title {
    margin: 142px 0 0;
    font-size: 50px;
    font-weight: 700;
    line-height: 60px;
    letter-spacing: 1.1px;
}

.venue-search {
    position: relative;
    width: 1136px;
    height: 96px;
    margin-top: 58px;
    border: 2px solid #cfcfcf;
    border-radius: 6px;
    display: flex;
    align-items: center;
    padding: 0 22px;
}

.venue-search-label {
    position: absolute;
    top: -16px;
    left: 16px;
    padding: 0 6px;
    background: #fff;
    color: #8f8f8f;
    font-size: 24px;
    line-height: 28px;
    letter-spacing: .9px;
}

.venue-search-icon {
    width: 42px;
    height: 42px;
    flex: none;
    fill: none;
    stroke: #a9a9a9;
    stroke-width: 2.2;
}

.venue-search-value {
    margin-left: 14px;
    font-size: 29px;
    letter-spacing: .8px;
}

.compass {
    width: 40px;
    height: 40px;
    margin-left: auto;
    fill: none;
    stroke: #b5b5b5;
    stroke-width: 2.5;
}

.compass-needle {
    stroke-width: 1;
}

.compass-half {
    fill: #b5b5b5;
    stroke: none;
}

.filter-row {
    width: 1136px;
    margin-top: 40px;
    display: flex;
    justify-content: space-between;
    align-items: center;
}

.select-wrap {
    position: relative;
}

.select {
    width: 169px;
    height: 76px;
    border-radius: 6px;
    display: flex;
    align-items: center;
    justify-content: space-between;
    color: #8a8a8a;
    font-size: 21px;
}

.select-open {
    border: 2px solid #33363f;
    padding: 0 16px;
}

.select-picked {
    background: #dcdcdc;
    line-height: 40px;
}

.select-page {
    border: 2px solid #dedede;
    padding: 0 18px 0 67px;
    margin-left: 38px;
    color: #a8a8a8;
}

.chevron {
    width: 20px;
    height: 12px;
    fill: none;
    stroke: #8a8a8a;
    stroke-width: 2.6;
}

.dropdown {
    position: absolute;
    top: 100%;
    left: 0;
    z-index: 2;
    width: 448px;
    height: 520px;
    margin: 0;
    padding: 36px 20px 0;
    list-style: none;
    background: #fff;
    border-radius: 6px;
    box-shadow: 0 4px 18px rgba(0, 0, 0, .16);
    font-size: 21px;
    color: #3a3a3a;
}

.dropdown li {
    height: 64px;
    margin-bottom: 32px;
    padding-left: 24px;
    line-height: 64px;
    border-radius: 6px;
}

.dropdown-on {
    background: #f3f3f3;
}

.pager {
    display: flex;
    align-items: center;
    color: #000a2c;
    font-size: 21px;
    font-weight: 600;
}

.pager a {
    text-decoration: underline;
}

.pager-rule {
    width: 2px;
    height: 30px;
    background: #000a2c;
    margin: 0 35px;
}

.results {
    display: flex;
    gap: 24px;
    margin-top: 48px;
}

.venue-card {
    width: 1136px;
    height: 600px;
    flex: none;
    background: #f3f3f3;
    padding: 14px 40px 0 87px;
}

.venue-head {
    display: flex;
    justify-content: flex-end;
    align-items: center;
    margin-right: -8px;
    text-align: right;
}

.venue-name {
    font-size: 30px;
    line-height: 36px;
    letter-spacing: .4px;
}

.venue-address {
    margin-top: 2px;
    color: #b8b8b8;
    font-size: 21px;
    line-height: 30px;
    letter-spacing: -.05px;
}

.venue-chevron {
    width: 22px;
    height: 13px;
    margin: 10px 0 0 29px;
}

.venue-phone-row {
    display: flex;
    justify-content: flex-end;
    margin-top: 50px;
}

.venue-phone {
    width: 248px;
    height: 72px;
    background: #e8e8e8;
    border-radius: 6px;
    padding-left: 21px;
    display: flex;
    align-items: center;
    gap: 18px;
    color: #000a2c;
    font-size: 20px;
    font-weight: 700;
    letter-spacing: -.1px;
}

.venue-phone svg {
    width: 28px;
    height: 28px;
    fill: #000a2c;
}

.phone-arc {
    fill: none;
    stroke: #000a2c;
    stroke-width: 1.6;
}

.venue-foot {
    display: flex;
    justify-content: space-between;
    margin-top: 227px;
}

.venue-hours {
    display: flex;
    gap: 84px;
    margin-top: 39px;
    font-size: 22px;
    font-weight: 500;
}

.venue-time {
    font-size: 21px;
    letter-spacing: -.3px;
}

.more-info {
    width: 170px;
    height: 64px;
    border: 3px solid #000a2c;
    border-radius: 6px;
    color: #000a2c;
    font-size: 21px;
    font-weight: 700;
    letter-spacing: .4px;
    display: flex;
    align-items: center;
    justify-content: center;
}

/* map */
.map {
    flex: 1;
    height: 500px;
    overflow: hidden;
    background: #bbddc0;
}

.map-svg {
    display: block;
    width: 1112px;
    height: 500px;
}

.map-wood {
    fill: #a4d2ae;
    stroke: #a4d2ae;
    stroke-width: 14;
    stroke-linejoin: round;
    opacity: .8;
}

.map-light {
    fill: #c6e3cb;
    stroke: #c6e3cb;
    stroke-width: 14;
    stroke-linejoin: round;
}

.map-water, .map-sea {
    fill: #94b3ef;
}

.map-town {
    fill: #e4e8ea;
}

.map-white, .map-road, .map-motorway, .map-motorway-inner {
    fill: none;
    stroke-linejoin: round;
}

.map-white {
    stroke: #fff;
    stroke-width: 4.5;
}

.map-road {
    stroke: #e8b04a;
    stroke-width: 4.5;
}

.map-motorway {
    stroke: #e8b04a;
    stroke-width: 14;
}

.map-motorway-inner {
    stroke: #fde3a0;
    stroke-width: 7;
}

.map-dots {
    fill: #f2f2f2;
    stroke: #2a2a2a;
    stroke-width: 6;
}

.map-label {
    font-family: Roboto, "Liberation Sans", sans-serif;
    font-size: 72px;
    fill: #1f1f1f;
    text-anchor: middle;
    stroke: rgba(255, 255, 255, .72);
    stroke-width: 12px;
    stroke-linejoin: round;
    paint-order: stroke;
}

.map-label-big {
    font-size: 78px;
    font-weight: 500;
}

.map-label-start {
    text-anchor: start;
}

.shield {
    fill: #7070c4;
}

.shield-green {
    fill: #7a9e4e;
}

.shield-text {
    font-family: Roboto, "Liberation Sans", sans-serif;
    font-size: 54px;
    font-weight: 500;
    fill: #fff;
    text-anchor: middle;
}

.shield-text-green {
    fill: #f8d74a;
}

.scroll-thumb {
    position: absolute;
    top: 4px;
    right: 5px;
    width: 13px;
    height: 491px;
    border-radius: 7px 7px 0 0;
    background: rgba(0, 0, 0, .5);
}
```
